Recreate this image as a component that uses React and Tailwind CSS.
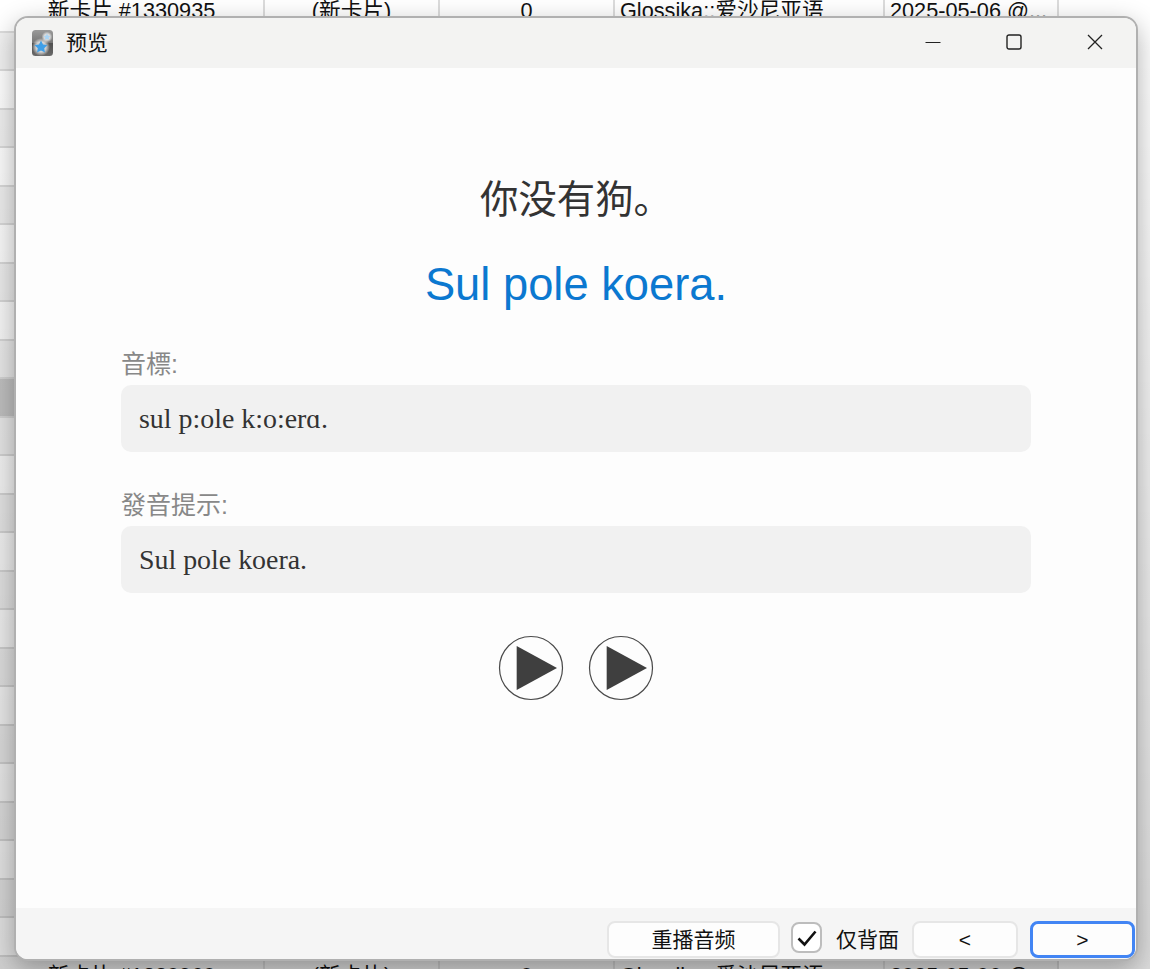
const COLS = ["w-[265px] text-center", "w-[175px] text-center", "w-[175px] text-center", "w-[270px] pl-[5px] text-left", "w-[174px] pl-[5px] text-left"];

function Row({ index, cells }) {
  const selected = index === 10;
  const bg = selected ? "bg-[#c8c8c8]" : index % 2 === 0 ? "bg-white" : "bg-[#f1f1f1]";
  const leading = index === 0 ? "leading-[34px]" : "leading-[38px]";
  return (
    <div className="flex h-[38.5px] shrink-0">
      {COLS.map((c, i) => (
        <div key={i} className={`${c} ${bg} ${leading} h-full whitespace-nowrap border-b-[2px] border-r-[2px] border-[#dcdcdc]`}>
          {cells ? cells[i] : null}
        </div>
      ))}
      <div className="flex-1 bg-white" />
    </div>
  );
}

function Logo() {
  return (
    <svg width="21" height="26" viewBox="0 0 21 26" className="shrink-0">
      <defs>
        <linearGradient id="lg" x1="0" y1="0" x2="0" y2="1">
          <stop offset="0" stopColor="#9a9a9a" />
          <stop offset="0.48" stopColor="#777777" />
          <stop offset="0.52" stopColor="#505050" />
          <stop offset="1" stopColor="#6a6a6a" />
        </linearGradient>
        <radialGradient id="gl" cx="0.5" cy="0.5" r="0.5">
          <stop offset="0.55" stopColor="#ffffff" stopOpacity="0.9" />
          <stop offset="1" stopColor="#ffffff" stopOpacity="0" />
        </radialGradient>
      </defs>
      <rect x="0" y="0" width="21" height="26" rx="3.5" fill="url(#lg)" />
      <circle cx="15" cy="7" r="5.5" fill="url(#gl)" opacity="0.75" />
      <circle cx="9" cy="17" r="9" fill="url(#gl)" opacity="0.8" />
      <path d="M15 3.5l1 2.2 2.4.3-1.8 1.6.5 2.4-2.1-1.2-2.1 1.2.5-2.4-1.8-1.6 2.4-.3z" fill="#a8d4f5" />
      <path d="M9 10.5l2 4 4.5.6-3.3 3.1.8 4.4L9 20.5l-4 2.1.8-4.4-3.3-3.1 4.5-.6z" fill="#3f9fe8" />
    </svg>
  );
}

function Play() {
  return (
    <svg width="66" height="66" viewBox="0 0 66 66" className="shrink-0">
      <circle cx="33" cy="33" r="31.5" fill="#fdfdfd" stroke="#4a4a4a" strokeWidth="1.2" />
      <path d="M18.7 11 L59 33 L18.7 55 Z" fill="#3f3f3f" />
    </svg>
  );
}

function Field({ label, children }) {
  return (
    <div className="w-[910px]">
      <div className="h-[35px] text-[25px] leading-[35px] text-[#888888]">{label}</div>
      <div className="mt-[3px] flex h-[67px] items-center rounded-[10px] bg-[#f1f1f1] px-[18px] text-[27.9px] text-[#333333] [font-family:'Liberation_Serif','Noto_Sans_CJK_SC',serif]">
        {children}
      </div>
    </div>
  );
}

function Btn({ className, children }) {
  return (
    <button className={`flex h-[37px] items-center justify-center rounded-[8px] bg-[#fdfdfd] text-[21px] text-[#111111] ${className}`}>
      {children}
    </button>
  );
}

export default function App() {
  const top = ["新卡片 #1330935", "(新卡片)", "0", "Glossika::爱沙尼亚语", "2025-05-06 @..."];
  const bottom = ["新卡片 #1330960", "(新卡片)", "0", "Glossika::爱沙尼亚语", "2025-05-06 @..."];
  return (
    <div className="relative h-[969px] w-[1150px] overflow-hidden bg-white text-[21.7px] text-[#111111] [font-family:'Liberation_Sans','Noto_Sans_CJK_SC',sans-serif]">
      <div className="-mt-[6px] flex flex-col">
        {Array.from({ length: 26 }).map((_, i) => (
          <Row key={i} index={i} cells={i === 0 ? top : i === 25 ? bottom : null} />
        ))}
      </div>
      <div className="absolute inset-0 bg-gradient-to-b from-[rgba(0,0,0,0)] from-[3%] to-[rgba(0,0,0,0.14)]" />

      <div className="absolute left-[14px] top-[16px] flex h-[945px] w-[1124px] flex-col overflow-hidden rounded-[14px] border-[2px] border-[#b0b0b0] bg-[#fdfdfd] shadow-[0_8px_26px_rgba(0,0,0,0.3)]">
        <div className="flex h-[50px] shrink-0 items-center bg-[#f3f3f2] pl-[16px]">
          <Logo />
          <span className="ml-[13px] text-[21px] text-[#111111]">预览</span>
          <div className="ml-auto flex items-center pb-[2px] pr-[33px]">
            <svg width="16" height="16" viewBox="0 0 16 16"><path d="M0.5 8.5H15.5" stroke="#222" strokeWidth="1.2" /></svg>
            <svg width="16" height="16" viewBox="0 0 16 16" className="ml-[65px]"><rect x="1" y="1" width="14" height="14" rx="2" fill="none" stroke="#222" strokeWidth="1.4" /></svg>
            <svg width="16" height="16" viewBox="0 0 16 16" className="ml-[65px]"><path d="M1 1L15 15M15 1L1 15" stroke="#222" strokeWidth="1.3" /></svg>
          </div>
        </div>

        <div className="flex flex-1 flex-col items-center bg-[#fdfdfd] pt-[105px]">
          <div className="text-[38.4px] leading-[54px] text-[#333333]">你没有狗。</div>
          <div className="mt-[28px] text-[45.3px] leading-[60px] text-[#0b78d0]">Sul pole koera.</div>
          <div className="mt-[32px] flex flex-col gap-[36px]">
            <Field label="音標:">sul p:ole k:o:erɑ.</Field>
            <Field label="發音提示:">Sul pole koera.</Field>
          </div>
          <div className="mt-[42px] flex gap-[24px]">
            <Play />
            <Play />
          </div>
        </div>

        <div className="flex h-[51px] shrink-0 items-start justify-end bg-[#f5f5f5] pr-[1px] pt-[13px]">
          <Btn className="w-[173px] border-[2px] border-[#e6e6e6]">重播音频</Btn>
          <div className="ml-[11px] mt-[1px] flex h-[31px] w-[31px] items-center justify-center rounded-[8px] border-[2px] border-[#bdbdbd] bg-white">
            <svg width="22" height="20" viewBox="0 0 22 20"><path d="M2.5 10.5L8.5 16.5L19.5 3.5" fill="none" stroke="#111" strokeWidth="2.6" /></svg>
          </div>
          <span className="ml-[14px] text-[21px] leading-[37px] text-[#111111]">仅背面</span>
          <Btn className="ml-[13px] w-[106px] border-[2px] border-[#e6e6e6]">&lt;</Btn>
          <Btn className="ml-[12px] w-[105px] border-[3px] border-[#4285f4]">&gt;</Btn>
        </div>
      </div>
    </div>
  );
}
